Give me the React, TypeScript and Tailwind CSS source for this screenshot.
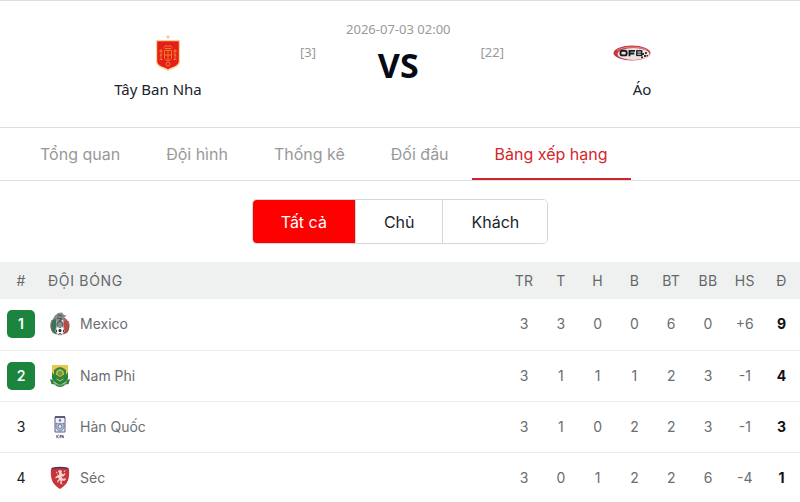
import clsx from "clsx";
import type { ReactNode } from "react";

const tabs = ["Tổng quan", "Đội hình", "Thống kê", "Đối đầu", "Bảng xếp hạng"];
const filters = ["Tất cả", "Chủ", "Khách"];
const columns = ["TR", "T", "H", "B", "BT", "BB", "HS", "Đ"];

function SpainCrest() {
  return (
    <svg viewBox="0 0 26 40" className="h-10 w-[26px]" aria-hidden="true">
      <path d="M13 1.500l.6 1.500 1.600.2-1.200 1 .3 1.600L13 5l-1.300.8.3-1.600-1.200-1 1.600-.2z" fill="#f1c878" />
      <path d="M1 7h24v21c0 4-3 6-6 7.200-2 .8-4 1.300-6 2.800-2-1.500-4-2-6-2.800C4 34 1 32 1 28z" fill="#f9d58c" />
      <path d="M2.200 8.200h21.600V28c0 3-2.500 4.600-5 5.700-2 .8-4 1.300-5.800 2.500-1.800-1.200-3.800-1.700-5.800-2.500-2.500-1.100-5-2.700-5-5.700z" fill="#e51d1b" />
      <g fill="none" stroke="#ef7c2a" strokeWidth="1">
        <path d="M9 14.500l1.500-2 2.500 1 2.500-1 1.500 2M9.500 15.500h7M6 16v10M20 16v10M4 18h4M18 18h4M4.500 23l3-2M18.500 21l3 2M4.500 26.500h3M18.500 26.500h3" />
        <path d="M9.500 17.500h7V25c0 1.500-2 2-3.500 3-1.500-1-3.500-1.500-3.500-3zM13 17.500V27M9.500 22h7" />
        <circle cx="13" cy="31" r="2" />
      </g>
    </svg>
  );
}

function AustriaCrest() {
  return (
    <svg viewBox="0 0 38 16" className="h-4 w-[38px]" aria-hidden="true">
      <ellipse cx="19" cy="8" rx="18.500" ry="7.400" fill="#c8343c" />
      <ellipse cx="20.500" cy="9" rx="16" ry="5.900" fill="#e9e4e4" />
      <path d="M4 5.500C10 1.500 25 .5 34 5" fill="none" stroke="#dd8d8e" strokeWidth="1" />
      <g fill="none" stroke="#1d1b1d" strokeWidth="1.900">
        <rect x="7.500" y="5.800" width="6.200" height="4.600" rx="2" />
        <path d="M16.500 11.300V5.900h5.500M16.500 8.500h4.800" />
        <rect x="23.800" y="5.800" width="4.800" height="4.600" strokeWidth="1.400" />
        <path d="M24 8.100h4.500" strokeWidth="1" />
      </g>
      <path d="M29 8h2v2h-2zM32 7h1.800v2H32zM31 10h2v2h-2zM28 11.500h2v1.800h-2zM33.500 10h1.500v1.500h-1.500z" fill="#343134" />
    </svg>
  );
}

function MexicoCrest() {
  return (
    <svg viewBox="0 0 20 24" className="h-6 w-5" aria-hidden="true">
      <path d="M5 5C1 8 0 14 1.500 18.500 3 21 5 22 7 22.500L8 6z" fill="#397459" />
      <path d="M15 6c4 3 5 8 3.500 12.500C17 21 15 22 13 22.500L12 6z" fill="#b74b43" />
      <path d="M6.500 7h7v14h-7z" fill="#eceae5" />
      <path d="M2 8C0 12 .5 18 4 21.500M18 9c2 4 1 9-2 12.500" fill="none" stroke="#796a58" strokeWidth="1" />
      <path d="M4.500 4L8 1l4-.5 2 2.500 2.500.5L14 6l2 3-4-1-1 4-3-1-2-4-3 1z" fill="#85898b" />
      <path d="M8 3l4 1M7 6l5 1M9 9l3-2" stroke="#4b5054" strokeWidth="1" />
      <circle cx="10" cy="12.500" r="3" fill="#7d918f" stroke="#4a4f51" />
      <circle cx="10" cy="18.500" r="4.500" fill="#f7f7f7" stroke="#8b8b8e" strokeWidth=".6" />
      <path d="M10 16.800l1.600 1.200-.6 2H9l-.6-2z" fill="#28292d" />
      <path d="M6 17.500l.8 1.500-.8 1.500M14 17.500l-.8 1.500.8 1.500M8.300 22.300l1.700-.8 1.700.8M8.500 14.800l1.500.6 1.500-.6" fill="none" stroke="#28292d" strokeWidth=".9" />
    </svg>
  );
}

function SouthAfricaCrest() {
  return (
    <svg viewBox="0 0 20 24" className="h-6 w-5" aria-hidden="true">
      <path d="M2 1h16v11c0 5-4 7-8 9-4-2-8-4-8-9z" fill="#e6c84b" />
      <path d="M4 6l3-2 3-1 3 1 3 2v6c0 3-3 5-6 7-3-2-6-4-6-7z" fill="#39813f" />
      <path d="M2 8l4 6 4 4 4-4 4-6v5c0 4-4 6-8 8-4-2-8-4-8-8z" fill="#27813f" />
      <path d="M10 5l3.500 2 .5 3.500-4 2.500-4-2.500.5-3.500z" fill="#c9c744" />
      <circle cx="10" cy="9.300" r="2.500" fill="#6f9c3c" />
      <path d="M6.500 15l3.500 2 3.500-2" fill="none" stroke="#b9cf55" strokeWidth="1" />
      <path d="M0 15l3 1c1 3 3 4 7 4.500 4-.5 6-1.500 7-4.500l3-1-1.500 5-3 .5c-1.500 1.500-3 2.500-5.500 2.500s-4-1-5.500-2.500L1.500 20z" fill="#317c3b" />
      <path d="M3.500 18.500C7 22 13 22 16.500 18.500" fill="none" stroke="#d8e2c2" strokeWidth=".8" strokeDasharray="1.200 .7" />
    </svg>
  );
}

function KoreaCrest() {
  return (
    <svg viewBox="0 0 20 24" className="h-6 w-5" aria-hidden="true">
      <path d="M5 2h10v15H5z" fill="#eef1f8" stroke="#4b4b75" strokeWidth=".9" />
      <path d="M5 2h10" stroke="#38385f" strokeWidth="1.400" />
      <path d="M10 3.500l1.500 2L10 7 8.500 5.500z" fill="#77779b" />
      <path d="M6 8l2 1 2-1 2 1 2-1v4l-1.500 3L10 16l-2.500-1L6 12z" fill="#b9c8de" stroke="#626f9c" strokeWidth=".8" />
      <circle cx="10" cy="11.500" r="1.900" fill="#eef1f8" stroke="#56608d" strokeWidth=".8" />
      <path d="M6.800 20v3M8.800 20l-1.700 1.500L8.800 23M10 23v-2.700h1.300v1.400H10M12 23l.8-2.800.9 2.800" fill="none" stroke="#45456c" strokeWidth=".8" />
    </svg>
  );
}

function CzechCrest() {
  return (
    <svg viewBox="0 0 20 24" className="h-6 w-5" aria-hidden="true">
      <path d="M1 2.500Q10-.5 19 2.500c.5 7 0 10-2 14-2 3-4.500 5-7 6.500-2.500-1.500-5-3.500-7-6.500-2-4-2.500-7-2-14z" fill="#c9343b" />
      <path d="M2 2.500Q10 .5 18 2.500" fill="none" stroke="#47365f" strokeWidth="1.500" />
      <path d="M8 5l2-1 2 1-.5 2 1.500 1.500L15 7l.5 1-2 2.500h-2l1 2 2.500.5-.5 2-2-.5-1 1.500 1 2.500-2.500-1 .5-3H9l-1 2.500-1-2 2-2-1-1.500-3 1 1-2 2-1-1.500-2L8.500 9l1-1z" fill="#f4d5d3" />
      <path d="M14 6l1-1.500M14.500 12l1 2M6 6l1.500 1" stroke="#f4d5d3" />
    </svg>
  );
}

const standings = [
  { rank: 1, name: "Mexico", crest: <MexicoCrest />, stats: ["3", "3", "0", "0", "6", "0", "+6"], points: 9 },
  { rank: 2, name: "Nam Phi", crest: <SouthAfricaCrest />, stats: ["3", "1", "1", "1", "2", "3", "-1"], points: 4 },
  { rank: 3, name: "Hàn Quốc", crest: <KoreaCrest />, stats: ["3", "1", "0", "2", "2", "3", "-1"], points: 3 },
  { rank: 4, name: "Séc", crest: <CzechCrest />, stats: ["3", "0", "1", "2", "2", "6", "-4"], points: 1 },
];

function Team({ name, away, children }: { name: string; away?: boolean; children: ReactNode }) {
  return (
    <div className="flex flex-1 flex-col items-center gap-1 pt-4">
      <div className={clsx("flex h-10 items-center", away ? "pr-5" : "pl-5")}>{children}</div>
      <p className="text-[15px] leading-6 text-[#20242a]">{name}</p>
    </div>
  );
}

function MatchHeader() {
  return (
    <header className="flex items-start border-y border-[#dedede] px-5 pt-4 pb-[26px] font-['Noto_Sans',sans-serif]">
      <Team name="Tây Ban Nha"><SpainCrest /></Team>
      <div className="flex w-[208px] items-center justify-between pl-1 text-[13px] text-[#9a9a9a]">
        <span>[3]</span>
        <div className="text-center">
          <time dateTime="2026-07-03T02:00" className="block leading-6">2026-07-03 02:00</time>
          <p className="text-[34px] leading-[48px] font-bold text-[#050a16]">VS</p>
        </div>
        <span>[22]</span>
      </div>
      <Team name="Áo" away><AustriaCrest /></Team>
    </header>
  );
}

export default function App() {
  return (
    <main className="bg-white font-[Inter,sans-serif]">
      <MatchHeader />

      <nav className="flex border-b border-[#dedede] px-[17px]">
        {tabs.map((tab) => (
          <a
            key={tab}
            href="#"
            className={clsx(
              "border-b-2 px-[23px] pt-[14px] pb-3 text-base leading-6",
              tab === "Bảng xếp hạng" ? "border-[#c9252b] text-[#d3262c]" : "border-transparent text-[#999999]",
            )}
          >
            {tab}
          </a>
        ))}
      </nav>

      <div className="flex justify-center py-[18px]">
        <div className="flex divide-x divide-[#d5d7d9] overflow-hidden rounded-[5px] border border-[#d5d7d9]">
          {filters.map((filter, i) => (
            <button
              key={filter}
              type="button"
              className={clsx("h-[43px] px-7 text-base", i === 0 ? "bg-[#fe0000] text-white" : "bg-white text-[#20242a]")}
            >
              {filter}
            </button>
          ))}
        </div>
      </div>

      <table className="w-full table-fixed text-center text-sm text-[#6b6d70]">
        <thead className="bg-[#eff1f1] tracking-wide text-[#65686b]">
          <tr className="h-[37px]">
            <th className="w-[42px] font-normal">#</th>
            <th className="pl-[6px] text-left font-normal tracking-wider">ĐỘI BÓNG</th>
            {columns.map((column) => (
              <th key={column} className="w-[4.6%] font-normal">{column}</th>
            ))}
          </tr>
        </thead>
        <tbody>
          {standings.map((row) => (
            <tr key={row.rank} className="h-[51px] border-b border-[#ededed]">
              <td>
                <span
                  className={clsx(
                    "mx-auto flex size-7 items-center justify-center rounded-[5px]",
                    row.rank <= 2 ? "bg-[#1b853f] font-semibold text-white" : "text-[#202124]",
                  )}
                >
                  {row.rank}
                </span>
              </td>
              <td className="pl-2">
                <div className="flex items-center gap-[10px]">
                  {row.crest}
                  <span>{row.name}</span>
                </div>
              </td>
              {row.stats.map((value, i) => (
                <td key={columns[i]}>{value}</td>
              ))}
              <td className="font-bold text-[#111214]">{row.points}</td>
            </tr>
          ))}
        </tbody>
      </table>
    </main>
  );
}
